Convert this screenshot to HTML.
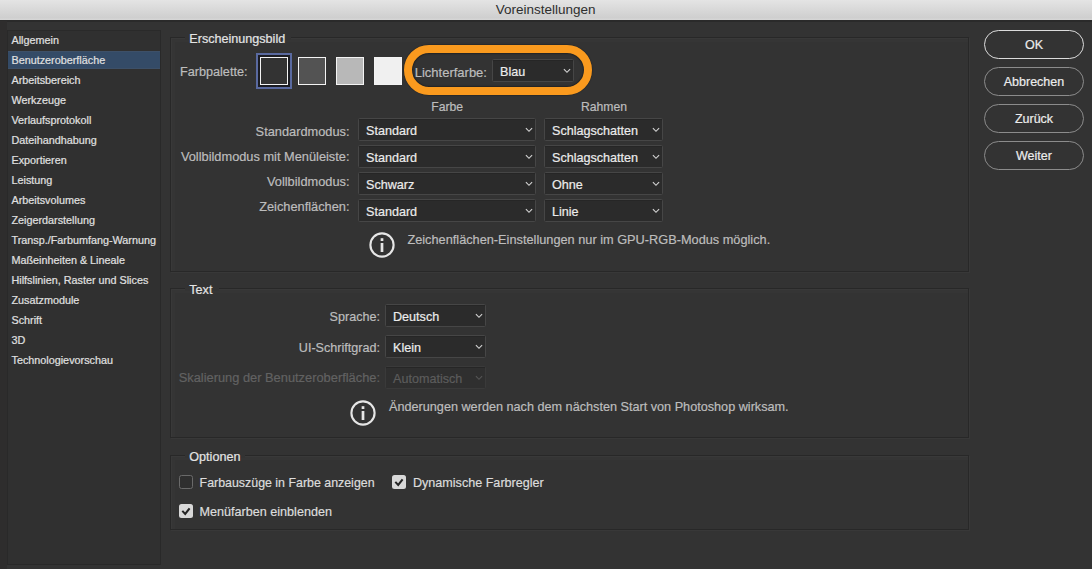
<!DOCTYPE html>
<html><head><meta charset="utf-8"><style>
html,body{margin:0;padding:0;}
body{width:1092px;height:569px;overflow:hidden;position:relative;background:#333333;font-family:"Liberation Sans", sans-serif;}
.t{position:absolute;white-space:nowrap;line-height:1;-webkit-text-stroke:0.2px currentColor;}
.r{position:absolute;}
</style></head><body>
<div class="r" style="left:0px;top:0px;width:1092px;height:20px;background:linear-gradient(#e4e4e4,#cfcfcf 88%,#d6d6d6);"></div>
<div class="r" style="left:0px;top:20px;width:1092px;height:1.5px;background:#2a2a2a;"></div>
<div class="t" style="left:245.70px;width:600px;text-align:center;top:3.02px;font-size:13.5px;color:#2e2e2e;-webkit-text-stroke:0;">Voreinstellungen</div>
<div class="r" style="left:0px;top:21px;width:7px;height:548px;background:#2e2d2d;"></div>
<div class="r" style="left:7px;top:30px;width:154px;height:535px;background:#303030;border-left:1px solid #292929;border-right:1px solid #292929;border-top:1px solid #2a2a2a;border-bottom:1px solid #292929;box-sizing:border-box;"></div>
<div class="r" style="left:8px;top:51px;width:152px;height:18px;background:#344b67;box-shadow:inset 0 1px 0 #3d5068, inset 0 -1px 0 #3d5068;"></div>
<div class="t" style="left:11.50px;top:34.81px;font-size:10.8px;color:#e0e0e0;">Allgemein</div>
<div class="t" style="left:11.50px;top:54.81px;font-size:10.8px;color:#e0e0e0;">Benutzeroberfläche</div>
<div class="t" style="left:11.50px;top:74.81px;font-size:10.8px;color:#e0e0e0;">Arbeitsbereich</div>
<div class="t" style="left:11.50px;top:94.81px;font-size:10.8px;color:#e0e0e0;">Werkzeuge</div>
<div class="t" style="left:11.50px;top:114.81px;font-size:10.8px;color:#e0e0e0;">Verlaufsprotokoll</div>
<div class="t" style="left:11.50px;top:134.81px;font-size:10.8px;color:#e0e0e0;">Dateihandhabung</div>
<div class="t" style="left:11.50px;top:154.81px;font-size:10.8px;color:#e0e0e0;">Exportieren</div>
<div class="t" style="left:11.50px;top:174.81px;font-size:10.8px;color:#e0e0e0;">Leistung</div>
<div class="t" style="left:11.50px;top:194.81px;font-size:10.8px;color:#e0e0e0;">Arbeitsvolumes</div>
<div class="t" style="left:11.50px;top:214.81px;font-size:10.8px;color:#e0e0e0;">Zeigerdarstellung</div>
<div class="t" style="left:11.50px;top:234.81px;font-size:10.8px;color:#e0e0e0;">Transp./Farbumfang-Warnung</div>
<div class="t" style="left:11.50px;top:254.81px;font-size:10.8px;color:#e0e0e0;">Maßeinheiten &amp; Lineale</div>
<div class="t" style="left:11.50px;top:274.81px;font-size:10.8px;color:#e0e0e0;">Hilfslinien, Raster und Slices</div>
<div class="t" style="left:11.50px;top:294.81px;font-size:10.8px;color:#e0e0e0;">Zusatzmodule</div>
<div class="t" style="left:11.50px;top:314.81px;font-size:10.8px;color:#e0e0e0;">Schrift</div>
<div class="t" style="left:11.50px;top:334.81px;font-size:10.8px;color:#e0e0e0;">3D</div>
<div class="t" style="left:11.50px;top:354.81px;font-size:10.8px;color:#e0e0e0;">Technologievorschau</div>
<div class="r" style="left:170px;top:37px;width:799px;height:235px;border:1px solid #282828;box-sizing:border-box;box-shadow:inset 1px 1px 0 #393939, inset 4px 4px 0 #353535, 1px 1px 0 #383838;"></div>
<div class="r" style="left:185.3px;top:35px;width:106px;height:5px;background:#333333;"></div>
<div class="t" style="left:189.30px;top:32.78px;font-size:12.6px;color:#e4e4e4;">Erscheinungsbild</div>
<div class="r" style="left:170px;top:288px;width:799px;height:150px;border:1px solid #282828;box-sizing:border-box;box-shadow:inset 1px 1px 0 #393939, inset 4px 4px 0 #353535, 1px 1px 0 #383838;"></div>
<div class="r" style="left:185.3px;top:286px;width:34px;height:5px;background:#333333;"></div>
<div class="t" style="left:189.30px;top:283.78px;font-size:12.6px;color:#e4e4e4;">Text</div>
<div class="r" style="left:170px;top:455px;width:799px;height:75px;border:1px solid #282828;box-sizing:border-box;box-shadow:inset 1px 1px 0 #393939, inset 4px 4px 0 #353535, 1px 1px 0 #383838;"></div>
<div class="r" style="left:185.3px;top:453px;width:60px;height:5px;background:#333333;"></div>
<div class="t" style="left:189.30px;top:450.78px;font-size:12.6px;color:#e4e4e4;">Optionen</div>
<div class="t" style="left:180.00px;top:65.94px;font-size:12.65px;color:#bdbdbd;">Farbpalette:</div>
<div class="r" style="left:256px;top:53px;width:36px;height:36px;border:2.6px solid #5a6aa0;box-sizing:border-box;background:#1b1c22;"></div>
<div class="r" style="left:260px;top:57px;width:28px;height:28px;background:#333333;border:1px solid #f4f4f4;box-sizing:border-box;"></div>
<div class="r" style="left:298px;top:57px;width:28px;height:28px;background:#535353;border:1px solid #f4f4f4;box-sizing:border-box;"></div>
<div class="r" style="left:336px;top:57px;width:28px;height:28px;background:#b8b8b8;border:1px solid #f4f4f4;box-sizing:border-box;"></div>
<div class="r" style="left:374px;top:57px;width:28px;height:28px;background:#f0f0f0;border:1px solid #f4f4f4;box-sizing:border-box;"></div>
<div class="r" style="left:403.5px;top:44.5px;width:188px;height:50px;border:8px solid #fa9a1e;border-radius:25px;box-sizing:border-box;box-shadow:0 0 1px 0.5px rgba(0,0,0,0.35), inset 0 0 1.5px 1px rgba(0,0,0,0.35);"></div>
<div class="t" style="left:414.70px;top:65.75px;font-size:13.0px;color:#bdbdbd;">Lichterfarbe:</div>
<div class="r" style="left:492px;top:59px;width:82px;height:23px;background:#2b2b2b;border:1px solid #464646;border-radius:1.5px;box-sizing:border-box;box-shadow:inset 0 1px 0 #262626;"></div>
<div class="t" style="left:500.00px;top:65.58px;font-size:12.6px;color:#ececec;">Blau</div>
<svg class="r" style="left:562.70px;top:68.00px" width="8" height="6"><path d="M0.9 1.2 L4 4.3 L7.1 1.2" fill="none" stroke="#d2d2d2" stroke-width="1.15"/></svg>
<div class="t" style="left:431.30px;top:101.42px;font-size:12.2px;color:#bdbdbd;">Farbe</div>
<div class="t" style="left:581.00px;top:101.42px;font-size:12.2px;color:#bdbdbd;">Rahmen</div>
<div class="t" style="left:-250.50px;width:600px;text-align:right;top:125.91px;font-size:12.8px;color:#bdbdbd;">Standardmodus:</div>
<div class="t" style="left:-250.50px;width:600px;text-align:right;top:151.01px;font-size:12.8px;color:#bdbdbd;">Vollbildmodus mit Menüleiste:</div>
<div class="t" style="left:-250.50px;width:600px;text-align:right;top:175.91px;font-size:12.8px;color:#bdbdbd;">Vollbildmodus:</div>
<div class="t" style="left:-250.50px;width:600px;text-align:right;top:200.71px;font-size:12.8px;color:#bdbdbd;">Zeichenflächen:</div>
<div class="r" style="left:358px;top:118px;width:178px;height:23px;background:#2b2b2b;border:1px solid #464646;border-radius:1.5px;box-sizing:border-box;box-shadow:inset 0 1px 0 #262626;"></div>
<div class="t" style="left:366.00px;top:125.08px;font-size:12.6px;color:#ececec;">Standard</div>
<svg class="r" style="left:524.70px;top:127.00px" width="8" height="6"><path d="M0.9 1.2 L4 4.3 L7.1 1.2" fill="none" stroke="#d2d2d2" stroke-width="1.15"/></svg>
<div class="r" style="left:544px;top:118px;width:119px;height:23px;background:#2b2b2b;border:1px solid #464646;border-radius:1.5px;box-sizing:border-box;box-shadow:inset 0 1px 0 #262626;"></div>
<div class="t" style="left:552.00px;top:125.08px;font-size:12.6px;color:#ececec;">Schlagschatten</div>
<svg class="r" style="left:651.70px;top:127.00px" width="8" height="6"><path d="M0.9 1.2 L4 4.3 L7.1 1.2" fill="none" stroke="#d2d2d2" stroke-width="1.15"/></svg>
<div class="r" style="left:358px;top:145px;width:178px;height:23px;background:#2b2b2b;border:1px solid #464646;border-radius:1.5px;box-sizing:border-box;box-shadow:inset 0 1px 0 #262626;"></div>
<div class="t" style="left:366.00px;top:152.08px;font-size:12.6px;color:#ececec;">Standard</div>
<svg class="r" style="left:524.70px;top:154.00px" width="8" height="6"><path d="M0.9 1.2 L4 4.3 L7.1 1.2" fill="none" stroke="#d2d2d2" stroke-width="1.15"/></svg>
<div class="r" style="left:544px;top:145px;width:119px;height:23px;background:#2b2b2b;border:1px solid #464646;border-radius:1.5px;box-sizing:border-box;box-shadow:inset 0 1px 0 #262626;"></div>
<div class="t" style="left:552.00px;top:152.08px;font-size:12.6px;color:#ececec;">Schlagschatten</div>
<svg class="r" style="left:651.70px;top:154.00px" width="8" height="6"><path d="M0.9 1.2 L4 4.3 L7.1 1.2" fill="none" stroke="#d2d2d2" stroke-width="1.15"/></svg>
<div class="r" style="left:358px;top:172px;width:178px;height:23px;background:#2b2b2b;border:1px solid #464646;border-radius:1.5px;box-sizing:border-box;box-shadow:inset 0 1px 0 #262626;"></div>
<div class="t" style="left:366.00px;top:179.08px;font-size:12.6px;color:#ececec;">Schwarz</div>
<svg class="r" style="left:524.70px;top:181.00px" width="8" height="6"><path d="M0.9 1.2 L4 4.3 L7.1 1.2" fill="none" stroke="#d2d2d2" stroke-width="1.15"/></svg>
<div class="r" style="left:544px;top:172px;width:119px;height:23px;background:#2b2b2b;border:1px solid #464646;border-radius:1.5px;box-sizing:border-box;box-shadow:inset 0 1px 0 #262626;"></div>
<div class="t" style="left:552.00px;top:179.08px;font-size:12.6px;color:#ececec;">Ohne</div>
<svg class="r" style="left:651.70px;top:181.00px" width="8" height="6"><path d="M0.9 1.2 L4 4.3 L7.1 1.2" fill="none" stroke="#d2d2d2" stroke-width="1.15"/></svg>
<div class="r" style="left:358px;top:199px;width:178px;height:23px;background:#2b2b2b;border:1px solid #464646;border-radius:1.5px;box-sizing:border-box;box-shadow:inset 0 1px 0 #262626;"></div>
<div class="t" style="left:366.00px;top:206.08px;font-size:12.6px;color:#ececec;">Standard</div>
<svg class="r" style="left:524.70px;top:208.00px" width="8" height="6"><path d="M0.9 1.2 L4 4.3 L7.1 1.2" fill="none" stroke="#d2d2d2" stroke-width="1.15"/></svg>
<div class="r" style="left:544px;top:199px;width:119px;height:23px;background:#2b2b2b;border:1px solid #464646;border-radius:1.5px;box-sizing:border-box;box-shadow:inset 0 1px 0 #262626;"></div>
<div class="t" style="left:552.00px;top:206.08px;font-size:12.6px;color:#ececec;">Linie</div>
<svg class="r" style="left:651.70px;top:208.00px" width="8" height="6"><path d="M0.9 1.2 L4 4.3 L7.1 1.2" fill="none" stroke="#d2d2d2" stroke-width="1.15"/></svg>
<svg class="r" style="left:368.40px;top:231.40px" width="28" height="28"><circle cx="14" cy="14" r="11.6" fill="none" stroke="#e6e6e6" stroke-width="2.1"/><rect x="12.65" y="7.2" width="2.7" height="2.8" fill="#e6e6e6"/><rect x="12.65" y="12.0" width="2.7" height="9" fill="#e6e6e6"/></svg>
<div class="t" style="left:407.40px;top:234.06px;font-size:12.75px;color:#bdbdbd;">Zeichenflächen-Einstellungen nur im GPU-RGB-Modus möglich.</div>
<div class="t" style="left:-220.00px;width:600px;text-align:right;top:310.68px;font-size:12.6px;color:#bdbdbd;">Sprache:</div>
<div class="t" style="left:-220.00px;width:600px;text-align:right;top:341.68px;font-size:12.6px;color:#bdbdbd;">UI-Schriftgrad:</div>
<div class="t" style="left:-220.00px;width:600px;text-align:right;top:372.47px;font-size:12.85px;color:#626262;">Skalierung der Benutzeroberfläche:</div>
<div class="r" style="left:385px;top:304px;width:101px;height:23px;background:#2b2b2b;border:1px solid #464646;border-radius:1.5px;box-sizing:border-box;box-shadow:inset 0 1px 0 #262626;"></div>
<div class="t" style="left:393.00px;top:311.18px;font-size:12.6px;color:#ececec;">Deutsch</div>
<svg class="r" style="left:474.70px;top:313.00px" width="8" height="6"><path d="M0.9 1.2 L4 4.3 L7.1 1.2" fill="none" stroke="#d2d2d2" stroke-width="1.15"/></svg>
<div class="r" style="left:385px;top:335px;width:101px;height:23px;background:#2b2b2b;border:1px solid #464646;border-radius:1.5px;box-sizing:border-box;box-shadow:inset 0 1px 0 #262626;"></div>
<div class="t" style="left:393.00px;top:342.18px;font-size:12.6px;color:#ececec;">Klein</div>
<svg class="r" style="left:474.70px;top:344.00px" width="8" height="6"><path d="M0.9 1.2 L4 4.3 L7.1 1.2" fill="none" stroke="#d2d2d2" stroke-width="1.15"/></svg>
<div class="r" style="left:385px;top:366px;width:101px;height:23px;background:#2f2f2f;border:1px solid #3a3a3a;border-radius:1.5px;box-sizing:border-box;box-shadow:inset 0 1px 0 #262626;"></div>
<div class="t" style="left:393.00px;top:373.18px;font-size:12.6px;color:#5c5c5c;">Automatisch</div>
<svg class="r" style="left:474.70px;top:375.00px" width="8" height="6"><path d="M0.9 1.2 L4 4.3 L7.1 1.2" fill="none" stroke="#555555" stroke-width="1.15"/></svg>
<svg class="r" style="left:349.30px;top:398.50px" width="28" height="28"><circle cx="14" cy="14" r="11.6" fill="none" stroke="#e6e6e6" stroke-width="2.1"/><rect x="12.65" y="7.2" width="2.7" height="2.8" fill="#e6e6e6"/><rect x="12.65" y="12.0" width="2.7" height="9" fill="#e6e6e6"/></svg>
<div class="t" style="left:389.00px;top:401.13px;font-size:12.66px;color:#bdbdbd;">Änderungen werden nach dem nächsten Start von Photoshop wirksam.</div>
<div class="r" style="left:179px;top:475px;width:14px;height:14px;border:1px solid #6a6a6a;border-radius:2.5px;box-sizing:border-box;background:#2f2f2f;"></div>
<div class="t" style="left:199.60px;top:477.35px;font-size:12.4px;color:#dcdcdc;">Farbauszüge in Farbe anzeigen</div>
<div class="r" style="left:392px;top:475px;width:14px;height:14px;background:#d8d8d8;border-radius:2.5px;"></div>
<svg class="r" style="left:392px;top:475px" width="14" height="14"><path d="M3.3 6.9 L6.2 9.9 L10.6 4.3" fill="none" stroke="#242424" stroke-width="2.05"/></svg>
<div class="t" style="left:412.90px;top:477.18px;font-size:12.6px;color:#dcdcdc;">Dynamische Farbregler</div>
<div class="r" style="left:179px;top:504px;width:14px;height:14px;background:#d8d8d8;border-radius:2.5px;"></div>
<svg class="r" style="left:179px;top:504px" width="14" height="14"><path d="M3.3 6.9 L6.2 9.9 L10.6 4.3" fill="none" stroke="#242424" stroke-width="2.05"/></svg>
<div class="t" style="left:199.60px;top:506.18px;font-size:12.6px;color:#dcdcdc;">Menüfarben einblenden</div>
<div class="r" style="left:984px;top:30px;width:100px;height:29px;border:1.5px solid #dcdcdc;border-radius:15px;box-sizing:border-box;"></div>
<div class="t" style="left:734.00px;width:600px;text-align:center;top:38.97px;font-size:12.5px;color:#ececec;">OK</div>
<div class="r" style="left:984px;top:67px;width:100px;height:29px;border:1.5px solid #8c8c8c;border-radius:15px;box-sizing:border-box;"></div>
<div class="t" style="left:734.00px;width:600px;text-align:center;top:75.97px;font-size:12.5px;color:#ececec;">Abbrechen</div>
<div class="r" style="left:984px;top:104px;width:100px;height:29px;border:1.5px solid #8c8c8c;border-radius:15px;box-sizing:border-box;"></div>
<div class="t" style="left:734.00px;width:600px;text-align:center;top:112.97px;font-size:12.5px;color:#ececec;">Zurück</div>
<div class="r" style="left:984px;top:141px;width:100px;height:29px;border:1.5px solid #8c8c8c;border-radius:15px;box-sizing:border-box;"></div>
<div class="t" style="left:734.00px;width:600px;text-align:center;top:149.97px;font-size:12.5px;color:#ececec;">Weiter</div>
</body></html>
